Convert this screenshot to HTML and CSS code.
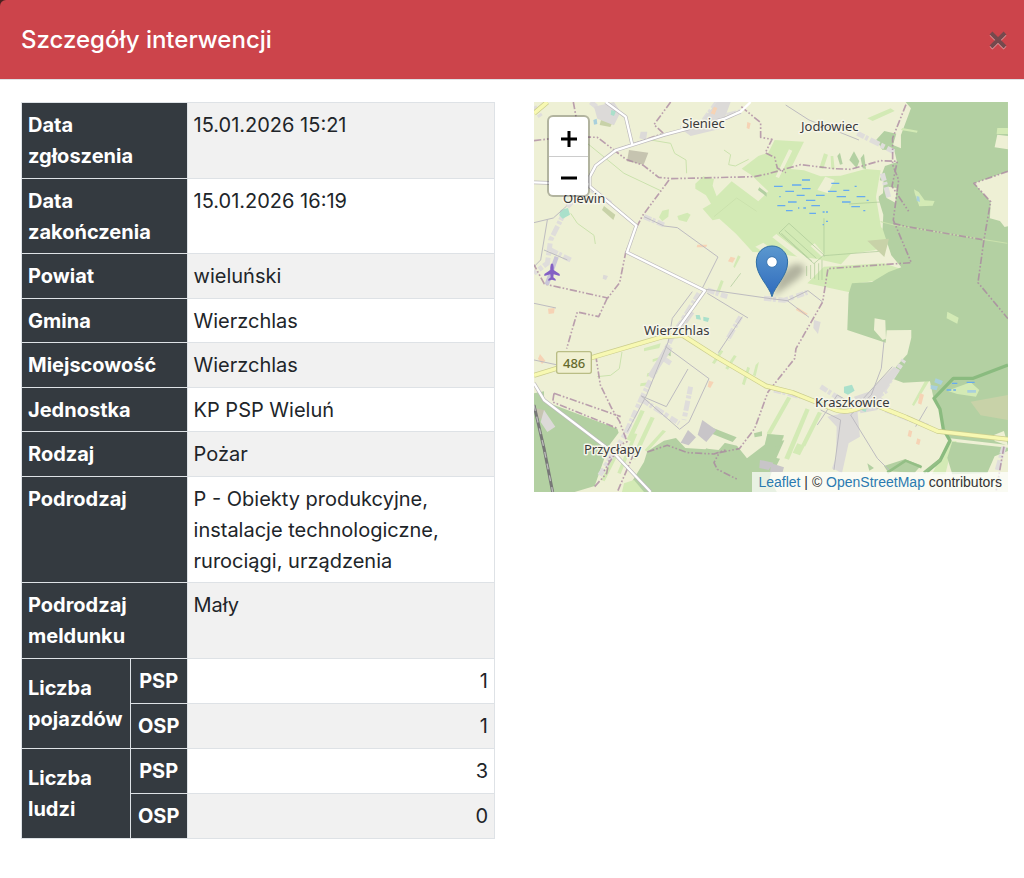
FILE: index.html
```html
<!DOCTYPE html>
<html lang="pl">
<head>
    <meta charset="UTF-8">
    <meta name="viewport" content="width=device-width, initial-scale=1">
    <title>Szczegóły interwencji</title>
    <link rel="stylesheet" href="styles.css">
</head>
<body>
<div class="modal">
    <div class="modal-header">
        <h1 class="modal-title">Szczegóły interwencji</h1>
        <button type="button" class="close" aria-label="Zamknij">
            <svg width="18" height="20" viewBox="0 0 18 20">
                <path class="close-shadow" d="M2 4l14 14M16 4L2 18"/>
                <path class="close-cross" d="M2 3l14 14M16 3L2 17"/>
            </svg>
        </button>
    </div>
    <div class="modal-body">
        <div class="col">
            <table class="details">
                <colgroup>
                    <col class="c-name">
                    <col class="c-unit">
                    <col class="c-value">
                </colgroup>
                <tbody class="info">
                <tr><th colspan="2" scope="row">Data<br>zgłoszenia</th><td>15.01.2026 15:21</td></tr>
                <tr><th colspan="2" scope="row">Data<br>zakończenia</th><td>15.01.2026 16:19</td></tr>
                <tr><th colspan="2" scope="row">Powiat</th><td>wieluński</td></tr>
                <tr><th colspan="2" scope="row">Gmina</th><td>Wierzchlas</td></tr>
                <tr><th colspan="2" scope="row">Miejscowość</th><td>Wierzchlas</td></tr>
                <tr><th colspan="2" scope="row">Jednostka</th><td>KP PSP Wieluń</td></tr>
                <tr><th colspan="2" scope="row">Rodzaj</th><td>Pożar</td></tr>
                <tr><th colspan="2" scope="row">Podrodzaj</th><td>P - Obiekty produkcyjne, instalacje technologiczne, rurociągi, urządzenia</td></tr>
                <tr><th colspan="2" scope="row">Podrodzaj meldunku</th><td>Mały</td></tr>
                </tbody>
                <tbody class="sums">
                <tr><th rowspan="2" scope="rowgroup" class="group">Liczba pojazdów</th><th scope="row" class="unit">PSP</th><td class="num">1</td></tr>
                <tr><th scope="row" class="unit">OSP</th><td class="num">1</td></tr>
                <tr><th rowspan="2" scope="rowgroup" class="group">Liczba<br>ludzi</th><th scope="row" class="unit">PSP</th><td class="num">3</td></tr>
                <tr><th scope="row" class="unit">OSP</th><td class="num">0</td></tr>
                </tbody>
            </table>
        </div>
        <div class="col">
            <div class="map">
                <svg class="tiles" width="100%" height="100%">
                    <defs>
                        <linearGradient id="pin" x1="0" y1="0" x2="0" y2="1">
                            <stop offset="0" stop-color="#5b98cf"/>
                            <stop offset="1" stop-color="#2f6bbd"/>
                        </linearGradient>
                        <filter id="soft" x="-50%" y="-50%" width="200%" height="200%">
                            <feGaussianBlur stdDeviation="9"/>
                        </filter>
                    </defs>
                    <g transform="scale(.3333) translate(0 -6)">
                        <!-- meadows -->
                        <g class="meadow">
                            <path d="M722 120l88 5-40 82 40 4 50 18 60-2 75-20 45 4-14 80 15 90 40 45-60 25-70 10-30 32-75-17-70-8-60-10-60-2-50-55-50-45-20 5-30-35 25-15-15-25-32-20 0-15 24-22 32 8-4 20 12 32 45-45 80 60 30-30-50-48-30-20 50-38 30-10z"/>
                            <path d="M870 500l180-10 54 18-50 30-80 12-20 28-84-18-50-10z"/>
                            <path d="M385 332l20-4-2 22-18 14-10-12zM430 348l30-10 10 6-12 22-24-6zM1000 55l70-30 12 8-66 30zM1240 635l34 18-4 18-32-16zM870 160l12 4-14 42-12-2zM890 168l8 0 4 40-10-2z"/>
                            <path d="M320 930l12 4-42 90-12-6zM350 950l12 4-58 125-12-6zM300 1000l10 2-50 120-10-4zM386 990l10 4-56 62-8-6zM760 890l12 4-62 110-12-4zM815 925l12 4-62 150-14-4zM852 935l12 4-50 100-12-4zM700 1000l50 10-30 62-30-8zM790 1030l22 8-14 28-22-8zM1190 812l12 4-62 102-6-4zM240 1060l12 4-40 80-10-4z"/>
                            <path d="M1240 1025l28-2-24 60-10 40-40 0 20-40zM1240 870l70-25 30 25-10 20-60-8z"/>
                            <path d="M330 745l50-15-4 14-46 10zM400 770l-44 16 0-8 44-14zM340 820l32-8-4 10-30 8zM320 850l30-4-2 9-30 4zM598 500l14-34 8 4-18 34zM545 580l16-40 8 4-14 38zM600 765l8 4-26 40-8-4zM640 800l8 4-16 52-8-4zM665 795l10-10-10 44-8-4zM560 750l8 4-26 38-8-4z"/>
                        </g>
                        <path class="field" d="M664 440l24-12 80 60-12 16zM715 412l12-10 90 70-10 12zM830 438l12-8 30 34-6 8zM760 478l8-8 34 28-6 6zM850 270l24-40 28 10-20 40zM725 230l40-82 10 4-40 82z"/>
                        <path class="track" d="M765 370l105 95-30 26-105-92zM752 390l95 85M742 400l92 84M870 470v-115M870 467l180-14M818 498v30M830 495v42M842 490v46M854 490v50M864 480v60M945 312l95-6M620 520l-30 40"/>

                        <!-- forests -->
                        <g class="forest">
                            <path d="M1062 6h360v208l-102 36 50 55-2 50 30 8 14 18 10-2v420l-104 36h-60l-60 56-10-47-80 4-40-15 20-35 32-35 12-50v-23l-74 1-3 37-115-38 4-109 10-31 60-4 50-30 38-14-30-36-26-80 2-42-14-46 4-60 15-40 36-12-8-35-36-2-18-30 24-26 36 8-10 34 24 10v-40l30-80-20-24z"/>
                            <path d="M1198 895l60-60 60-2 104-40v242l-174-20-20-35-10-55z"/>
                            <path d="M1255 1025l167 18v10l-40 16-22 50-105 4-15-50z"/>
                            <path d="M0 880l30-6 0 30 220 82 4 12-30 40-42 120-60 18H0zM275 1176l55-90 10-32 50-32 36-8 28 30 60 4 35-25 60 14 30 38 60-46 52-8-24 54-20 60 22 42v38H270zM528 980l80 32-12 14-66-26zM1050 1098l62-20 50 18-20 22-82-4zM1000 1090l20 14-14 8z"/>
                            <path d="M676 262l22 16 0 12-26-20zM946 180l14-26 16 30-8 20zM980 175l10-14 6 46-10-2zM910 168l8-10 8 34-8 2zM390 745l20 8 0 16-16-8zM700 1002l50 4-14 34-44-6zM710 1070l28 6-18 36-16-6zM660 1000l24-6 0 14-22 4z"/>
                        </g>
                        <path class="field" d="M1022 655l32 6 2 55-10 4-26-30zM1035 240l14 4-2 36-14 10zM1062 260l26 4-4 44-26-14zM1390 104l32 4v40l-40-6zM512 1030l30-22 36 14-24 28-34-4zM1380 1005l30-12 12 44-40-14z"/>
                        <path class="meadow" d="M270 1150l30-10 30 36h-66zM1105 84l46 8-2 6-48-8zM1390 84h32v18h-34zM1140 268l14 8 18 25 30 2-6 14-40 2-14-40zM1240 635l34 18-4 18-32-16zM1240 872l70-25 26 23-10 20-56-8z"/>
                        <path class="scrub" d="M1310 905l112-20v75l-82-14zM1000 422l65-6-14 55zM205 45l40 4-16 32-32-6zM210 318l34 26-6 16-34-30z"/>
                        <path class="yard" d="M285 150l58 8-14 36-50-10zM5 925l28 6-6 26-18-4z"/>
                        <path class="industry" d="M505 960l42 30-30 36-26-22zM462 990l24 22-22 24-24-8zM678 1080l40 8-14 22-28-6zM712 1090l38 12-4 14-38 0z"/>

                        <!-- built-up strips -->
                        <g class="houses">
                            <path d="M170 6l60 50M440 85l70-20 110-30M510 60l40-54M0 20l20 30"/>
                            <path d="M100 320l60-60 70 50M90 340l-40 80-10 70-40 30M50 450l60 30"/>
                            <path d="M495 580l-80 130-90 180-50 110-80 130M410 790l-30-20M620 650l-40 70M520 570l60 20M690 595l60 6 70-24M330 350l60 25"/>
                            <path d="M970 100l110 55M1045 220l20 75M860 860l110 70 90-60M920 940l10 90-30 80M950 950l20 40M1050 870l60-90M720 870l80 20M1055 930l130 50M1410 1040l-20 70M470 860l-20 100M325 900l110 70"/>
                        </g>
                        <path class="urban" d="M880 950l90-20 8 80-34 20-20 90-18-10 2-130zM960 890l60-20 30 30-20 30-50 10zM1010 870l70-70 18 10-60 80zM415 690l50-60 16 10-50 70zM396 735l20 10-60 90-14-10zM500 66l50-60h40l-30 80-90 22-20-14zM320 95h20l-4 26-20-6zM180 20l60-14 20 30-20 40-50-20zM30 930l34 50-24 16-20-30zM840 660l20 6-8 36-14-18zM208 524l14 4-6 12-10-4z"/>
                        <path class="orange" d="M540 20l10 4-8 20-12-4zM590 470l14 4-8 14-14-4zM490 434h30l-4 8h-28zM42 626l20-2-2 16-16 2zM525 842l14 4-10 18-8-4zM1125 990l10 4-4 18-10-4zM1150 1015l10 4-4 16-10-4zM18 762l16 20-10 10-12-16zM1158 880l12 4-8 30-10-4zM790 622l32 20-8 4-28-16zM640 66l10 4-4 18-8-4z"/>
                        <path class="sport" d="M80 330l22-6 6 20-22 12-10-10zM485 645l12 0 4 14-14-2zM508 650l18 4-4 12-14-4zM930 860l24-6 8 18-20 12-12-6zM985 920l14 2-4 14-10-4zM232 30l14 4-6 14-10-4z"/>
                        <path class="water" d="M1205 835l22 8-6 12-20-8zM1190 855l22 4-4 12-18-4zM1300 870h26v8h-26zM1148 288l8 2 2 16-10-4zM178 60l10-4 2 16-10 2z"/>

                        <!-- minor streets -->
                        <path class="street" d="M0 368l58-14 40-36M330 350l60 28 40 5 122 88-50 100M520 580l122 74M625 650l-72 108M515 568l195 28 50 6 62-30 44 34M760 602l65 50M475 575l-60 80-12 70-65 160-58 110M395 740l130 96-60 130-28 22-115-100 75 32 65-113M0 610l66 14M30 450l70 30M0 500l20-20 20-120M755 15l70 45 150 60M1050 725l-8 80-30 80-62 60 80 130 40 40M1075 800l-100 110M850 975l60-90 70 40M900 1110l20-150M920 960l-60-30M1180 920l-35 60M0 780l66 14"/>
                        <path class="stream" d="M350 120l60 10 12 30 34 20 2 40M160 130l110 90 110 52M570 150l20 14-6 30 20 4 40-20M540 350l68-56 60 40M110 340l20 30 50 36 4 26M190 830l40-4 26-20 8-50M1040 365l40 10 340 55"/>

                        <!-- administrative borders -->
                        <g class="border">
                            <path d="M118 6l10 55M0 122l100-12 90 2 50 38 36 28 52 18 46 36 40 4 246-6 40-8 50-14 50-14 100 12 50 2 90-26 50 2-16 75 50 75"/>
                            <path d="M405 240l-80 108-20 40-30 70-18 90-36 46-190-42-31-58M220 594l-26 56-64-14-32 110"/>
                            <path d="M410 6l-50 68 28 26-140 50M622 20l58 48v44l34 6-20 40 28 14 8 32 26 14"/>
                            <path d="M1116 14l-40 100v80l18 46-16 120 54 128-250 18-16 100-80 140-4 30-80 100-40 110-46 60-60 12-16 30 10 20 60 30"/>
                            <path d="M1078 370l40 10 234 40M1422 214l-102 36 50 55-20 115-18 128 90 108M185 765l14 90 34 70 24 40 22 60-20 10-50 80M60 880l200 70M60 880l-4 26 196 80M340 1056l60-20 60 22 80 4 40-14M300 1060l-50 116M182 1160l36-40 10-50M1410 1040l-24 136"/>
                        </g>

                        <!-- marsh -->
                        <path class="marsh" d="M720 259h26M754 274h26M774 255h28M804 240h24M804 266h26M788 286h24M762 306h26M730 317h24M756 332h20M816 301h28M846 286h26M832 317h26M826 340h20M882 274h26M892 250h24M908 290h28M928 271h18M924 306h26M952 320h26M968 290h26M988 332h6M998 301h6M866 336h6M876 336h6M876 364h6M792 324h4M808 324h8M962 259h6M736 290h4M866 374h4M1254 850h16M1298 847h24M1238 870h14M1258 870h8"/>

                        <!-- river bank -->
                        <path class="river" d="M1422 795l-104 40-60 0-58 60 18 32 10 60 20 35-30 60-40 34"/>
                        <path class="bank" d="M1060 1118l55-36 48 20M1170 1118l50-40"/>

                        <!-- railway -->
                        <path class="rail" d="M0 915l30 130 26 131"/>
                        <path class="rail-dash" d="M0 915l30 130 26 131"/>

                        <!-- local roads -->
                        <path class="road-case" d="M215 6l60 44 20 85M620 35l-50 22-180 48-145 46-60 46-18 34 0 28 140 118-28 80 234 115-80 112M0 247l170 6M0 850l30 50 210 160 110 116"/>
                        <path class="road" d="M215 6l60 44 20 85M650 6l-30 29-50 22-180 48-145 46-60 46-18 34 0 28 140 118-28 80 234 115-80 112M0 247l170 6M0 850l30 50 210 160 110 116"/>
                        <path class="main-case" d="M0 826l190-58 196-58 60-4 100 64 150 88 80 20 130 52q30 10 70-6l40-12 100 40 95 42 211 24M0 40l40-34"/>
                        <path class="main" d="M0 826l190-58 196-58 60-4 100 64 150 88 80 20 130 52q30 10 70-6l40-12 100 40 95 42 211 24M0 40l40-34"/>

                        <!-- airfield -->
                        <path class="runway" d="M68 470l-30 84"/>
                        <path class="plane" d="M54 490q5 2 5 12v8l18 12v6l-18-5-1 9 7 6v4l-11-3-11 3v-4l7-6-1-9-18 5v-6l18-12v-8q0-10 5-12z"/>

                        <!-- route number plate -->
                        <rect class="plate" x="68" y="755" width="104" height="65" rx="6"/>
                    </g>

                    <g class="labels">
                        <text x="148" y="26">Sieniec</text>
                        <text x="267" y="29">Jodłowiec</text>
                        <text x="29" y="101">Olewin</text>
                        <text x="110" y="233">Wierzchlas</text>
                        <text x="281" y="305">Kraszkowice</text>
                        <text x="50" y="352">Przycłapy</text>
                        <text class="ref" x="29" y="266">486</text>
                    </g>

                    <g transform="scale(.3333) translate(0 -6)">
                        <path d="M716 590l20-60q40-50 66-36t-20 50z" fill="#000" opacity=".25" filter="url(#soft)"/>
                        <path d="M714 590c-8-32-47-62-47-104 0-28 21-48 47-48s47 20 47 48c0 42-39 72-47 104z" fill="url(#pin)" stroke="#2e6da4" stroke-width="3"/>
                        <circle cx="714" cy="486" r="16" fill="#fff" stroke="#3a75b0" stroke-width="3"/>
                    </g>
                </svg>
                <div class="zoom">
                    <button type="button" aria-label="Przybliż"><svg width="18" height="18"><path d="M1 9h16M9 1v16"/></svg></button>
                    <button type="button" aria-label="Oddal"><svg width="18" height="18"><path d="M1 9h16"/></svg></button>
                </div>
                <div class="attribution"><a href="#">Leaflet</a> | © <a href="#">OpenStreetMap</a> contributors</div>
            </div>
        </div>
    </div>
</div>
</body>
</html>
```
FILE: styles.css
```css
*{
    box-sizing: border-box;
}
body{
    margin: 0;
    background: #fff;
    color: #212529;
    font-family: Inter, "Liberation Sans", sans-serif;
    font-size: 20px;
    line-height: 31px;
}
.modal{
    background: linear-gradient(#4a2220, #4a2220) no-repeat 0 0 / 8px 8px;
}
.modal-header{
    display: flex;
    align-items: center;
    justify-content: space-between;
    padding: 20px 17px 19px 21px;
    background: #cc444b;
    border-bottom: 1px solid #dee2e6;
    border-top-left-radius: 6px;
}
.modal-title{
    margin: 0;
    font-size: 24px;
    font-weight: 500;
    line-height: 40px;
    color: #fff;
}
.close{
    display: flex;
    padding: 0;
    border: 0;
    background: none;
    cursor: pointer;
}
.close path{
    fill: none;
    stroke-width: 4;
}
.close-shadow{
    stroke: #e5a1a5;
}
.close-cross{
    stroke: #75494d;
}
.modal-body{
    display: grid;
    grid-template-columns: 1fr 1fr;
    gap: 39px;
    padding: 22px 16px 40px 21px;
}

/* details table */
.details{
    width: 100%;
    table-layout: fixed;
    border-collapse: collapse;
}
.c-name{
    width: 23%;
}
.c-unit{
    width: 12%;
}
.details th,
.details td{
    padding: 7px 6px 6px;
    border: 1px solid #dee2e6;
    text-align: left;
    vertical-align: top;
}
.details th{
    background: #343a40;
    color: #fff;
    font-weight: 700;
}
.info tr:nth-child(even) th,
.info tr:nth-child(even) td{
    padding-bottom: 5px;
}
.info tr:nth-child(odd) td,
.sums tr:nth-child(even) td{
    background: #f1f1f1;
}
.details .group{
    vertical-align: middle;
}
.details .unit{
    padding-right: 0;
    padding-left: 0;
    text-align: center;
}
.details .num{
    text-align: right;
}

/* map */
.map{
    position: relative;
    height: 390px;
    overflow: hidden;
    background: #eef0d5;
}
.tiles{
    display: block;
}
.tiles path{
    stroke-linejoin: round;
}
.meadow{
    fill: #d3eab5;
}
.forest{
    fill: #b3d0a2;
}
.field{
    fill: #eef0d5;
}
.scrub{
    fill: #c8d2a8;
}
.yard{
    fill: #c6c4b0;
}
.industry{
    fill: #c8c5c8;
}
.urban{
    fill: #dcdad8;
}
.orange{
    fill: #f6d3b5;
}
.sport{
    fill: #aae0cb;
}
.water{
    fill: #a9d0dc;
}
.track, .street, .stream, .houses, .border, .marsh, .river, .bank,
.rail, .rail-dash, .road, .road-case, .main, .main-case, .runway{
    fill: none;
}
.track{
    stroke: #a9c795;
    stroke-width: 2;
}
.houses{
    stroke: #dfdddb;
    stroke-width: 15;
    stroke-dasharray: 23 4 9 7 31 5 12 9;
}
.street{
    stroke: #bdbbc0;
    stroke-width: 3;
}
.stream{
    stroke: #cbe2ad;
    stroke-width: 3;
}
.border{
    stroke: #a985a0;
    stroke-width: 5;
    stroke-dasharray: 22 6 5 6 5 6;
    opacity: .75;
}
.marsh{
    stroke: #66aaf0;
    stroke-width: 4;
}
.river{
    stroke: #8abb7f;
    stroke-width: 10;
}
.bank{
    stroke: #94bf86;
    stroke-width: 8;
}
.rail{
    stroke: #777;
    stroke-width: 9;
}
.rail-dash{
    stroke: #bbb;
    stroke-width: 4;
    stroke-dasharray: 18 18;
}
.road-case{
    stroke: #bdbabd;
    stroke-width: 11;
}
.road{
    stroke: #fff;
    stroke-width: 7;
}
.main-case{
    stroke: #cbcd8d;
    stroke-width: 15;
}
.main{
    stroke: #f7f8b2;
    stroke-width: 11;
}
.runway{
    stroke: #c9c5d8;
    stroke-width: 13;
}
.plane{
    fill: #8461c4;
}
.plate{
    fill: #f0f0d2;
    stroke: #b9bd85;
    stroke-width: 4;
}
.labels{
    font-family: "Noto Sans", sans-serif;
    font-size: 13px;
    fill: #3a3a3a;
    stroke: #f6f6ea;
    stroke-width: 3px;
    stroke-linejoin: round;
    paint-order: stroke;
}
.labels .ref{
    fill: #646a2c;
    stroke: none;
    font-weight: 500;
}
.zoom{
    position: absolute;
    top: 13px;
    left: 13px;
    display: flex;
    flex-direction: column;
    border: 2px solid rgba(0, 0, 0, .25);
    border-radius: 6px;
    background: #fff;
    background-clip: padding-box;
}
.zoom button{
    display: flex;
    align-items: center;
    justify-content: center;
    width: 39px;
    height: 39px;
    padding: 4px 0 0;
    border: 0;
    background: none;
    cursor: pointer;
}
.zoom button + button{
    border-top: 1px solid #ccc;
}
.zoom path{
    fill: none;
    stroke: #000;
    stroke-width: 3;
}
.attribution{
    position: absolute;
    right: 0;
    bottom: 0;
    padding: 0 6px;
    background: rgba(255, 255, 255, .7);
    color: #333;
    font-family: "Liberation Sans", sans-serif;
    font-size: 14px;
    line-height: 20px;
}
.attribution a{
    color: #2a7ab0;
    text-decoration: none;
}
```
